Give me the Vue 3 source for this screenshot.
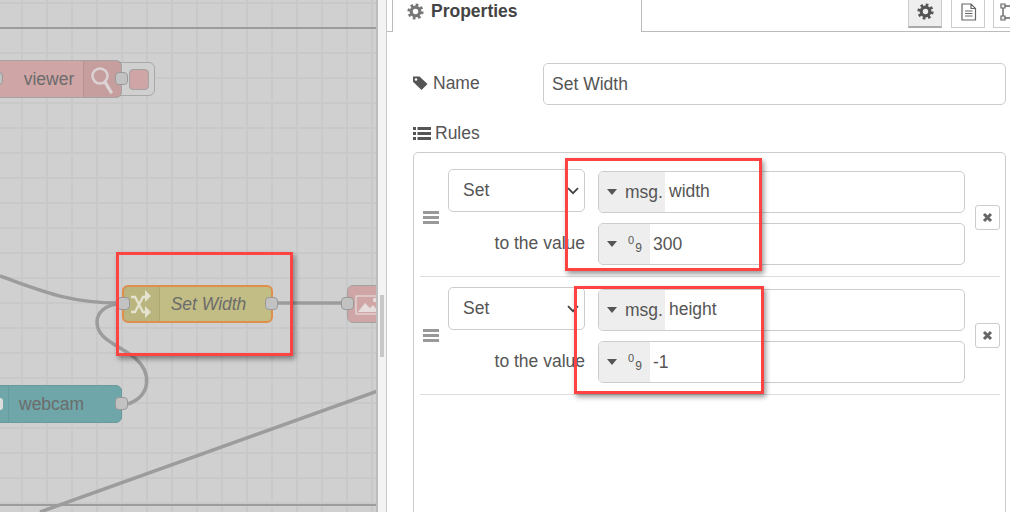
<template>
  <div class="editor">
    <div class="canvas">
      <svg class="wires" width="376" height="512">
        <path d="M0 28H378M0 505H378" class="wire thin" />
        <path d="M0 276C45 292 70 303 118 303" class="wire" />
        <path d="M276 303H349" class="wire" />
        <path d="M128 404C150 396 153 374 135 358C118 344 97 340 97 322C97 312 106 305 118 304" class="wire" />
        <path d="M40 512L378 391" class="wire" />
      </svg>

      <div class="button-box"><span class="button-inner"></span></div>

      <div class="node viewer">
        <span class="node-label">viewer</span>
        <span class="node-icon right">
          <svg width="37" height="37" viewBox="0 0 37 37">
            <circle cx="16" cy="15" r="7.5" fill="none" stroke="#dcd4d4" stroke-width="2.4" />
            <path d="M21 21L27 31" stroke="#dcd4d4" stroke-width="3.4" stroke-linecap="round" />
          </svg>
        </span>
        <span class="port port-left"></span>
        <span class="port port-right"></span>
      </div>

      <div class="node change">
        <span class="node-icon left">
          <svg width="35" height="34" viewBox="0 0 35 34">
            <path d="M7 10H11L19 25H22M7 25H11L19 10H22" fill="none" stroke="#e4e3cf" stroke-width="2.3" />
            <path d="M21 3L27 9L21 15ZM21 19L27 25L21 31Z" fill="#e4e3cf" />
          </svg>
        </span>
        <span class="node-label italic">Set Width</span>
        <span class="port port-left"></span>
        <span class="port port-right"></span>
      </div>

      <div class="node image">
        <span class="node-icon left">
          <svg width="37" height="37" viewBox="0 0 37 37">
            <rect x="8" y="10" width="25" height="18" fill="none" stroke="#e6dcdc" stroke-width="1.2" />
            <path d="M10 26L17 17L22 22L25 19L31 26Z" fill="#e6dcdc" />
            <circle cx="27" cy="14" r="2.2" fill="#e6dcdc" />
          </svg>
        </span>
        <span class="port port-left"></span>
      </div>

      <div class="node webcam">
        <span class="node-icon left"></span>
        <span class="node-label">webcam</span>
        <span class="port port-right"></span>
      </div>
      <span class="webcam-stub"></span>
    </div>

    <div class="splitter"><span class="scroll-thumb"></span></div>

    <div class="sidebar">
      <div class="tabs">
        <span class="tab-stub"></span>
        <div class="tab">
          <svg class="icon" width="17" height="17" viewBox="0 0 17 17">
            <circle cx="8.5" cy="8.5" r="6.6" fill="none" stroke="#777" stroke-width="3" stroke-dasharray="2.6 2.58" />
            <circle cx="8.5" cy="8.5" r="4.3" fill="none" stroke="#777" stroke-width="3.2" />
          </svg>
          <span>Properties</span>
        </div>
        <div class="tab-buttons">
          <span class="tab-btn active">
            <svg width="17" height="17" viewBox="0 0 17 17">
              <circle cx="8.5" cy="8.5" r="6.6" fill="none" stroke="#555" stroke-width="3" stroke-dasharray="2.6 2.58" />
              <circle cx="8.5" cy="8.5" r="4.3" fill="none" stroke="#555" stroke-width="3.2" />
            </svg>
          </span>
          <span class="tab-btn">
            <svg width="17" height="18" viewBox="0 0 17 18">
              <path d="M2 1H11L15.5 5.5V17H2ZM11 1V5.5H15.5M5 8H12.5M5 10.5H12.5M5 13H12.5" fill="none" stroke="#666" stroke-width="1.2" />
            </svg>
          </span>
          <span class="tab-btn last">
            <svg width="17" height="18" viewBox="0 0 17 18">
              <path d="M3 3H15M3 3V15M3 15H15M15 3V8" fill="none" stroke="#666" stroke-width="1.4" />
              <path d="M1 1H5V5H1ZM1 13H5V17H1ZM13 1H17V5H13Z" fill="#eee" stroke="#666" stroke-width="1.2" />
            </svg>
          </span>
        </div>
      </div>

      <div class="form">
        <div class="name-row">
          <label class="label">
            <svg width="16" height="16" viewBox="0 0 16 16">
              <path d="M0 1.5H6.5L14.5 9L8.5 15L0 6.8ZM3 3.2A1.3 1.3 0 1 0 3 5.8A1.3 1.3 0 1 0 3 3.2Z" fill="#555" fill-rule="evenodd" />
            </svg>
            Name
          </label>
          <input class="text-input name-input" value="Set Width" />
        </div>

        <div class="label rules-label">
          <svg width="18" height="15" viewBox="0 0 18 15">
            <path d="M0 1H3V4H0ZM4.5 1H18V4H4.5ZM0 6H3V9H0ZM4.5 6H18V9H4.5ZM0 11H3V14H0ZM4.5 11H18V14H4.5Z" fill="#555" />
          </svg>
          Rules
        </div>

        <div class="rules">
          <div v-for="(rule, i) in rules" :key="rule.prop" class="rule" :class="{ first: i === 0 }">
            <span class="handle"><i></i><i></i><i></i></span>
            <div class="rule-body">
              <div class="rule-line">
                <div class="op-wrap">
                  <select class="rule-op"><option>Set</option></select>
                  <svg class="chevron" width="12" height="8" viewBox="0 0 12 8">
                    <path d="M1 1.2L6 6.2L11 1.2" fill="none" stroke="#444" stroke-width="1.8" />
                  </svg>
                </div>
                <div class="typed typed-top">
                  <span class="typed-type wide"><i class="caret"></i>msg.</span>
                  <span class="typed-value">{{ rule.prop }}</span>
                </div>
              </div>
              <div class="rule-line second">
                <span class="to-label">to the value</span>
                <div class="typed">
                  <span class="typed-type"><i class="caret"></i><span class="num-icon"><sup>0</sup><sub>9</sub></span></span>
                  <span class="typed-value">{{ rule.value }}</span>
                </div>
              </div>
            </div>
            <button class="delete">
              <svg width="11" height="11" viewBox="0 0 11 11">
                <path d="M2 2L9 9M9 2L2 9" stroke="#666" stroke-width="3" />
              </svg>
            </button>
          </div>
        </div>
      </div>
    </div>

    <div class="mark mark-node"></div>
    <div class="mark mark-width"></div>
    <div class="mark mark-height"></div>
  </div>
</template>

<script setup>
const rules = [
  { prop: 'width', value: '300' },
  { prop: 'height', value: '-1' }
]
</script>

<style>
body {
  margin: 0;
  overflow: hidden;
}
</style>

<style scoped>
.editor {
  position: relative;
  display: flex;
  width: 1010px;
  height: 512px;
  overflow: hidden;
  font-family: "Liberation Sans", Arial, sans-serif;
  font-size: 17.5px;
  color: #555;
  background: #fff;
}

.canvas {
  position: relative;
  flex: none;
  box-sizing: border-box;
  width: 378px;
  height: 512px;
  overflow: hidden;
  border-right: 2px solid #bcbcbc;
  background-color: #d0d0d0;
  background-image:
    linear-gradient(90deg, #c9c9c9 2px, transparent 2px),
    linear-gradient(#c9c9c9 2px, transparent 2px);
  background-size: 25px 25px;
  background-position: 21px 2px;
}

.wires {
  position: absolute;
  inset: 0;
}

.wire {
  fill: none;
  stroke: #9c9c9c;
  stroke-width: 3.5;
}

.wire.thin {
  stroke-width: 2;
}

.node {
  position: absolute;
  box-sizing: border-box;
  height: 38px;
  display: flex;
  align-items: center;
  border: 1.5px solid #a3a3a3;
  border-radius: 6px;
  color: #6c6c6c;
}

.node-label {
  flex: 1;
  text-align: center;
}

.italic {
  font-style: italic;
}

.node-icon {
  flex: none;
  display: flex;
  align-items: center;
  justify-content: center;
  width: 37px;
  height: 100%;
  background: rgba(0, 0, 0, 0.04);
}

.node-icon.left {
  border-right: 1px solid rgba(0, 0, 0, 0.07);
}

.node-icon.right {
  border-left: 1px solid rgba(0, 0, 0, 0.07);
}

.port {
  position: absolute;
  top: 11px;
  width: 13px;
  height: 13px;
  box-sizing: border-box;
  background: #c2c2c2;
  border: 1.5px solid #999;
  border-radius: 4px;
}

.port-left {
  left: -7px;
}

.port-right {
  right: -7px;
}

.viewer {
  left: -20px;
  top: 60px;
  width: 142px;
  background: #cfa5a5;
}

.viewer .node-label {
  padding-left: 34px;
}

.viewer .port-left {
  left: 9px;
}

.button-box {
  position: absolute;
  left: 115px;
  top: 62px;
  box-sizing: border-box;
  width: 40px;
  height: 34px;
  padding: 6px 5px 5px 13px;
  border: 1.5px solid #a8a8a8;
  border-radius: 6px;
  background: #d0d0d0;
}

.button-inner {
  display: block;
  height: 100%;
  background: #cfa5a5;
  border: 1.5px solid #a3a3a3;
  border-radius: 4px;
  box-sizing: border-box;
}

.change {
  left: 122px;
  top: 285px;
  width: 151px;
  background: #c2bd84;
  border: 2px solid #df8f4c;
}

.change .node-icon {
  width: 35px;
}

.change .node-label {
  padding-right: 14px;
}

.change .port {
  top: 10px;
}

.image {
  left: 347px;
  top: 285px;
  width: 70px;
  background: #cfa5a5;
}

.image .node-icon {
  background: none;
}

.webcam {
  left: -30px;
  top: 385px;
  width: 152px;
  background: #6fa6a9;
  border-color: #6a9a9c;
}

.webcam .node-icon {
  background: none;
}

.webcam .node-label {
  text-align: left;
  padding-left: 10px;
}

.webcam-stub {
  position: absolute;
  left: 0;
  top: 398px;
  width: 3px;
  height: 12px;
  background: #ddd;
  border-radius: 0 3px 3px 0;
}

.splitter {
  position: relative;
  flex: none;
  width: 9px;
  height: 512px;
  box-sizing: border-box;
  background: #f3f3f3;
  border-right: 1px solid #c8c8c8;
}

.scroll-thumb {
  position: absolute;
  left: 2px;
  top: 295px;
  width: 4px;
  height: 62px;
  background: #c8c8c8;
}

.sidebar {
  flex: 1;
  min-width: 0;
}

.tabs {
  display: flex;
  height: 32px;
  box-sizing: border-box;
}

.tab-stub {
  flex: none;
  width: 5px;
  border-bottom: 1px solid #bbb;
}

.tab {
  flex: none;
  box-sizing: border-box;
  width: 250px;
  height: 32px;
  padding: 0 0 9px 14px;
  display: flex;
  align-items: center;
  gap: 7px;
  font-weight: bold;
  color: #444;
  border-left: 1px solid #bbb;
  border-right: 1px solid #bbb;
}

.icon {
  flex: none;
}

.tab-buttons {
  flex: 1;
  display: flex;
  gap: 9px;
  padding-left: 266px;
  border-bottom: 1px solid #bbb;
}

.tab-btn {
  flex: none;
  box-sizing: border-box;
  width: 34px;
  height: 28px;
  display: flex;
  align-items: center;
  justify-content: center;
  padding-bottom: 3px;
  border: 1px solid #ccc;
  border-top: none;
}

.tab-btn.active {
  background: #eee;
  border-bottom: 2px solid #aaa;
}

.tab-btn.last {
  justify-content: flex-start;
  margin-left: -1px;
  padding-left: 6px;
}

.form {
  padding: 31px 4px 0 26px;
}

.name-row {
  display: flex;
  align-items: center;
}

.label {
  display: flex;
  align-items: center;
  gap: 4px;
}

.name-row .label {
  width: 130px;
  margin-top: -2px;
}

.text-input {
  box-sizing: border-box;
  flex: 1;
  min-width: 0;
  height: 42px;
  padding: 0 8px;
  font: inherit;
  color: #555;
  background: #fff;
  border: 1px solid #ccc;
  border-radius: 5px;
}

.rules-label {
  margin-top: 17px;
  height: 22px;
  gap: 4px;
}

.rules {
  box-sizing: border-box;
  height: 400px;
  margin-top: 8px;
  padding: 0 5px 0 6px;
  border: 1px solid #ccc;
  border-radius: 5px;
}

.rule {
  display: flex;
  align-items: center;
  padding: 10px 0 11px;
  border-bottom: 1px solid #ddd;
}

.rule.first {
  padding-top: 16px;
}

.handle {
  flex: none;
  width: 28px;
  display: flex;
  flex-direction: column;
  gap: 2px;
  padding-left: 3px;
  box-sizing: border-box;
}

.handle i {
  display: block;
  width: 16px;
  height: 3px;
  background: #999;
}

.rule-body {
  flex: none;
  width: 517px;
}

.rule-line {
  display: flex;
  gap: 13px;
  align-items: flex-start;
}

.rule-line.second {
  margin-top: 10px;
  align-items: center;
}

.op-wrap {
  position: relative;
  flex: none;
  width: 137px;
  height: 43px;
}

.rule-op {
  appearance: none;
  display: block;
  box-sizing: border-box;
  width: 100%;
  height: 43px;
  padding: 0 0 1px 14px;
  font: inherit;
  color: #555;
  background: #fff;
  border: 1px solid #ccc;
  border-radius: 5px;
}

.chevron {
  position: absolute;
  right: 6px;
  top: 18px;
}

.to-label {
  flex: none;
  width: 137px;
  text-align: right;
  margin-top: -2px;
}

.typed {
  flex: 1;
  display: flex;
  height: 42px;
  box-sizing: border-box;
  border: 1px solid #ccc;
  border-radius: 5px;
  overflow: hidden;
}

.typed-top {
  margin-top: 2px;
}

.typed-type {
  flex: none;
  display: flex;
  align-items: center;
  gap: 8px;
  width: 51px;
  padding-left: 8px;
  box-sizing: border-box;
  background: #eee;
}

.typed-type.wide {
  width: 66px;
}

.caret {
  flex: none;
  width: 0;
  height: 0;
  border-left: 5.5px solid transparent;
  border-right: 5.5px solid transparent;
  border-top: 6px solid #555;
}

.num-icon {
  display: flex;
  align-items: center;
  gap: 1px;
  font-size: 11px;
  margin-left: 3px;
}

.num-icon sup {
  margin-top: -9px;
  font-size: 11px;
  vertical-align: baseline;
}

.num-icon sub {
  margin-top: 7px;
  font-size: 12px;
  vertical-align: baseline;
}

.typed-value {
  padding-left: 3px;
  line-height: 38px;
}

.typed-top .typed-value {
  padding-left: 4px;
}

.second .typed-value {
  line-height: 40px;
}

.delete {
  flex: none;
  box-sizing: border-box;
  width: 25px;
  height: 25px;
  margin: 1px 0 0 10px;
  padding: 0;
  display: flex;
  align-items: center;
  justify-content: center;
  background: #fff;
  border: 1px solid #ccc;
  border-radius: 3px;
}

.mark {
  position: absolute;
  box-sizing: border-box;
  border: 3px solid #ff4343;
  box-shadow: 2px 3px 5px rgba(0, 0, 0, 0.4);
}

.mark-node {
  left: 116px;
  top: 252px;
  width: 177px;
  height: 104px;
}

.mark-width {
  left: 565px;
  top: 158px;
  width: 197px;
  height: 113px;
}

.mark-height {
  left: 574px;
  top: 286px;
  width: 190px;
  height: 108px;
}
</style>
